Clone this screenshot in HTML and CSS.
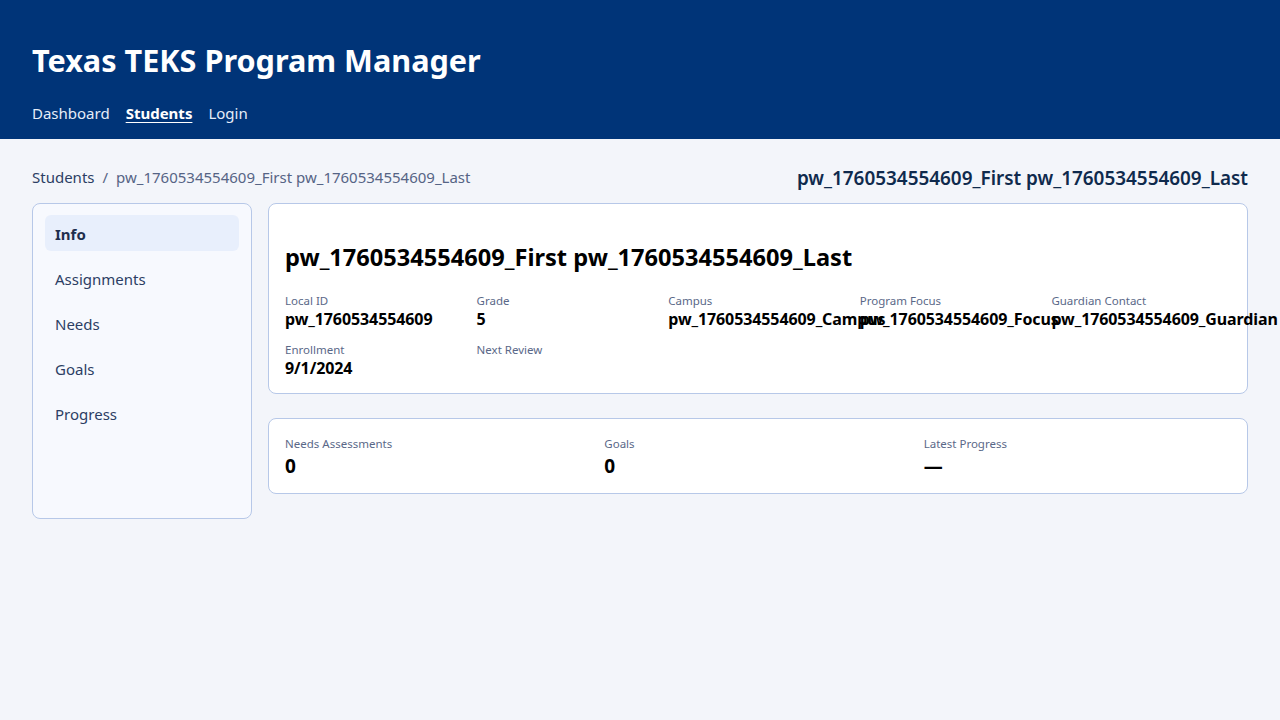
FILE: index.html
```html
<!DOCTYPE html>
<html lang="en">
<head>
<meta charset="utf-8">
<title>Texas TEKS Program Manager</title>
<link rel="stylesheet" href="styles.css">
</head>
<body>
<header class="topbar">
  <h1 class="brand">Texas TEKS Program Manager</h1>
  <nav class="nav">
    <a class="nav-link" href="#">Dashboard</a>
    <a class="nav-link active" href="#">Students</a>
    <a class="nav-link" href="#">Login</a>
  </nav>
</header>
<main class="page">
  <div class="page-head">
    <div class="crumbs"><a href="#" class="crumb-link">Students</a><span class="sep">/</span><span class="crumb-current">pw_1760534554609_First pw_1760534554609_Last</span></div>
    <div class="page-title">pw_1760534554609_First pw_1760534554609_Last</div>
  </div>
  <div class="layout">
    <aside class="sidebar">
      <a class="side-item active" href="#">Info</a>
      <a class="side-item" href="#">Assignments</a>
      <a class="side-item" href="#">Needs</a>
      <a class="side-item" href="#">Goals</a>
      <a class="side-item" href="#">Progress</a>
    </aside>
    <section class="content">
      <div class="card info-card">
        <h2 class="student-name">pw_1760534554609_First pw_1760534554609_Last</h2>
        <div class="fields">
          <div class="field"><div class="label">Local ID</div><div class="value">pw_1760534554609</div></div>
          <div class="field"><div class="label">Grade</div><div class="value">5</div></div>
          <div class="field"><div class="label">Campus</div><div class="value">pw_1760534554609_Campus</div></div>
          <div class="field"><div class="label">Program Focus</div><div class="value">pw_1760534554609_Focus</div></div>
          <div class="field"><div class="label">Guardian Contact</div><div class="value">pw_1760534554609_Guardian</div></div>
          <div class="field"><div class="label">Enrollment</div><div class="value">9/1/2024</div></div>
          <div class="field"><div class="label">Next Review</div><div class="value"></div></div>
        </div>
      </div>
      <div class="card stats-card">
        <div class="stat"><div class="label">Needs Assessments</div><div class="stat-value">0</div></div>
        <div class="stat"><div class="label">Goals</div><div class="stat-value">0</div></div>
        <div class="stat"><div class="label">Latest Progress</div><div class="stat-value">—</div></div>
      </div>
    </section>
  </div>
</main>
</body>
</html>
```
FILE: styles.css
```css
* { box-sizing: border-box; }
html, body { margin: 0; padding: 0; }
body {
  font-family: "Noto Sans", "Open Sans", "DejaVu Sans", sans-serif;
  background: #f3f5fa;
  color: #111;
  min-height: 720px;
}
.topbar {
  background: #003478;
  color: #fff;
  padding: 39px 32px 16px;
  height: 139px;
}
.brand {
  margin: 0;
  font-size: 30.6px;
  line-height: 42px;
  font-weight: 700;
}
.nav {
  display: flex;
  gap: 16px;
  margin-top: 21px;
}
.nav-link {
  color: #e6edf8;
  text-decoration: none;
  font-size: 15px;
  line-height: 22px;
}
.nav-link.active {
  color: #fff;
  font-weight: 700;
  text-decoration: underline;
  text-underline-offset: 3px;
}
.page {
  padding: 24px 32px;
}
.page-head {
  display: flex;
  justify-content: space-between;
  align-items: center;
  height: 30px;
}
.crumbs {
  font-size: 15px;
  color: #566485;
  display: flex;
  gap: 8px;
  margin-top: -2px;
}
.crumb-link { color: #2c3e64; text-decoration: none; }
.sep { color: #566485; }
.page-title {
  font-size: 18.9px;
  font-weight: 600;
  color: #0f2a4d;
}
.layout {
  display: flex;
  gap: 16px;
  margin-top: 10px;
  align-items: flex-start;
}
.sidebar {
  width: 220px;
  min-height: 316px;
  flex: none;
  background: #f7f9fe;
  border: 1px solid #b7c8e8;
  border-radius: 8px;
  padding: 11px 12px;
  display: flex;
  flex-direction: column;
  gap: 9px;
}
.side-item {
  display: block;
  height: 36px;
  line-height: 38px;
  padding: 0 10px;
  border-radius: 6px;
  color: #2c3e64;
  text-decoration: none;
  font-size: 15px;
}
.side-item.active {
  background: #e8effc;
  font-weight: 700;
  color: #1f2e4d;
}
.content {
  flex: 1;
  display: flex;
  flex-direction: column;
  gap: 24px;
}
.card {
  background: #fff;
  border: 1px solid #b7c8e8;
  border-radius: 8px;
  padding: 16px;
}
.info-card { height: 191px; }
.student-name {
  margin: 22px 0 21px;
  font-size: 23.6px;
  line-height: 30px;
  font-weight: 700;
  color: #000;
}
.fields {
  display: grid;
  grid-template-columns: repeat(5, 1fr);
  column-gap: 12px;
  row-gap: 13px;
}
.field { min-width: 0; }
.label {
  font-size: 11.5px;
  line-height: 16px;
  color: #5a6888;
}
.value {
  font-size: 16px;
  line-height: 20px;
  font-weight: 700;
  color: #000;
  white-space: nowrap;
  letter-spacing: -0.1px;
}
.stats-card {
  display: grid;
  grid-template-columns: repeat(3, 1fr);
  column-gap: 12px;
  height: 76px;
  padding-top: 17px;
}
.stat-value {
  font-size: 19px;
  line-height: 26px;
  font-weight: 700;
  color: #000;
  margin-top: 1px;
}
```
